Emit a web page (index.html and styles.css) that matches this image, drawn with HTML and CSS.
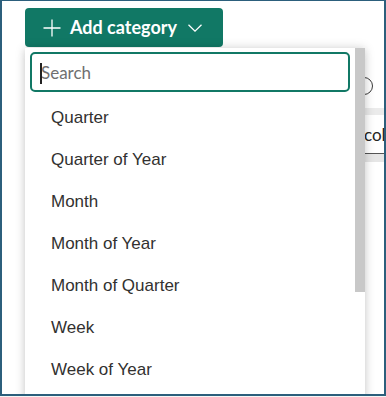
FILE: index.html
```html
<!DOCTYPE html>
<html lang="en">
<head>
<meta charset="utf-8">
<title>Add category</title>
<link rel="stylesheet" href="styles.css">
</head>
<body>
<div class="frame">
  <div class="toolbar">
    <button class="add-btn" type="button">
      <svg class="plus" width="18" height="18" viewBox="0 0 18 18" aria-hidden="true">
        <path d="M9 0.5V17.5M0.5 9H17.5" stroke="#fff" stroke-width="1.3" fill="none"/>
      </svg>
      <span class="add-label">Add category</span>
      <svg class="chev" width="14" height="8" viewBox="0 0 14 8" aria-hidden="true">
        <path d="M0.5 0.7L7 7.1L13.5 0.7" stroke="#fff" stroke-width="1.3" fill="none"/>
      </svg>
    </button>
  </div>

  <div class="behind">
    <div class="circle"></div>
    <div class="band"></div>
    <div class="col-text">colu</div>
    <div class="rule"></div>
    <div class="band2"></div>
  </div>

  <div class="panel">
    <div class="panel-main">
      <div class="search">
        <input class="search-input" type="text" placeholder="Search">
        <span class="caret"></span>
      </div>
      <ul class="items">
        <li>Quarter</li>
        <li>Quarter of Year</li>
        <li>Month</li>
        <li>Month of Year</li>
        <li>Month of Quarter</li>
        <li>Week</li>
        <li>Week of Year</li>
      </ul>
    </div>
    <div class="scrollbar"></div>
  </div>
</div>
</body>
</html>
```

FILE: styles.css
```css
* { box-sizing: border-box; }

html, body {
  margin: 0;
  padding: 0;
  background: #f6f6f6;
}

.frame {
  position: relative;
  width: 386px;
  height: 396px;
  border: 2px solid #2c5f7c;
  border-top-width: 1px;
  background: #fff;
  overflow: hidden;
}

.toolbar {
  padding: 7px 0 0 23px;
  height: 46px;
}

.add-btn {
  display: flex;
  align-items: center;
  width: 198px;
  height: 39px;
  padding: 0 0 0 18px;
  border: 0;
  border-radius: 4px;
  background: #117865;
  color: #fff;
  font-family: Lato, "Open Sans", sans-serif;
  font-weight: 700;
  font-size: 18px;
  cursor: pointer;
}

.plus { flex: none; }

.add-label {
  margin-left: 9px;
  line-height: 20px;
  padding-bottom: 1px;
}

.chev {
  flex: none;
  margin-left: 11px;
  margin-top: 1px;
}

/* content behind the dropdown */
.behind {
  margin-left: 353px;
}

.circle {
  width: 18px;
  height: 18px;
  margin-top: 30px;
  border: 1.5px solid #3a3a3a;
  border-radius: 50%;
}

.band {
  margin-top: 13px;
  height: 7px;
  background: #ebebeb;
}

.col-text {
  margin-top: 8px;
  padding-left: 9px;
  font-family: Lato, "Open Sans", sans-serif;
  font-size: 17px;
  line-height: 24px;
  color: #242424;
  white-space: nowrap;
}

.rule {
  margin-top: 6px;
  height: 1px;
  background: #555;
}

.band2 {
  height: 8px;
  background: #e6e6e6;
}

/* dropdown panel */
.panel {
  position: absolute;
  left: 23px;
  top: 47px;
  width: 340px;
  height: 420px;
  display: flex;
  background: #fff;
  box-shadow: 0 0 10px rgba(0, 0, 0, 0.16), 0 3px 8px rgba(0, 0, 0, 0.08);
}

.panel-main {
  flex: 1;
  padding: 4px 5px 0 5px;
}

.search {
  position: relative;
}

.search-input {
  display: block;
  width: 320px;
  height: 40px;
  padding: 0 0 0 9px;
  border: 2px solid #117865;
  border-radius: 5px;
  font-family: Lato, "Open Sans", sans-serif;
  font-size: 17px;
  color: #242424;
  outline: none;
}

.search-input::placeholder {
  color: #707070;
}

.caret {
  position: absolute;
  left: 10px;
  top: 11px;
  width: 1.5px;
  height: 21px;
  background: #222;
}

.items {
  list-style: none;
  margin: 4.5px 0 0 0;
  padding: 0;
}

.items li {
  height: 42px;
  line-height: 42px;
  padding-left: 21px;
  font-family: "Liberation Sans", Arial, sans-serif;
  font-size: 17px;
  color: #323130;
  white-space: nowrap;
}

.scrollbar {
  flex: none;
  align-self: flex-start;
  width: 10px;
  height: 244px;
  background: #c8c8c8;
}
```
